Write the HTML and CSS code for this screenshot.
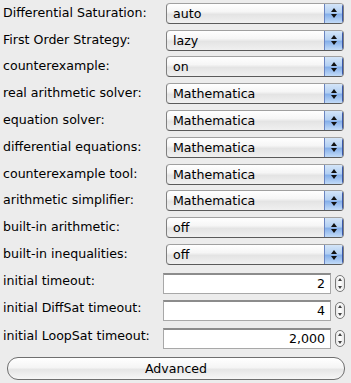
FILE: index.html
```html
<!DOCTYPE html>
<html>
<head>
<meta charset="utf-8">
<link rel="stylesheet" href="styles.css">
</head>
<body>
<div class="panel">
  <div class="row"><span class="label">Differential Saturation:</span><div class="select"><span class="val">auto</span><span class="arrows"><i class="up"></i><i class="dn"></i></span></div></div>
  <div class="row"><span class="label">First Order Strategy:</span><div class="select"><span class="val">lazy</span><span class="arrows"><i class="up"></i><i class="dn"></i></span></div></div>
  <div class="row"><span class="label">counterexample:</span><div class="select"><span class="val">on</span><span class="arrows"><i class="up"></i><i class="dn"></i></span></div></div>
  <div class="row"><span class="label">real arithmetic solver:</span><div class="select"><span class="val">Mathematica</span><span class="arrows"><i class="up"></i><i class="dn"></i></span></div></div>
  <div class="row"><span class="label">equation solver:</span><div class="select"><span class="val">Mathematica</span><span class="arrows"><i class="up"></i><i class="dn"></i></span></div></div>
  <div class="row"><span class="label">differential equations:</span><div class="select"><span class="val">Mathematica</span><span class="arrows"><i class="up"></i><i class="dn"></i></span></div></div>
  <div class="row"><span class="label">counterexample tool:</span><div class="select"><span class="val">Mathematica</span><span class="arrows"><i class="up"></i><i class="dn"></i></span></div></div>
  <div class="row"><span class="label">arithmetic simplifier:</span><div class="select"><span class="val">Mathematica</span><span class="arrows"><i class="up"></i><i class="dn"></i></span></div></div>
  <div class="row"><span class="label">built-in arithmetic:</span><div class="select"><span class="val">off</span><span class="arrows"><i class="up"></i><i class="dn"></i></span></div></div>
  <div class="row"><span class="label">built-in inequalities:</span><div class="select"><span class="val">off</span><span class="arrows"><i class="up"></i><i class="dn"></i></span></div></div>
  <div class="row tall"><span class="label">initial timeout:</span><div class="field">2</div><div class="stepper"><i class="up"></i><i class="dn"></i></div></div>
  <div class="row tall"><span class="label">initial DiffSat timeout:</span><div class="field">4</div><div class="stepper"><i class="up"></i><i class="dn"></i></div></div>
  <div class="row tall"><span class="label">initial LoopSat timeout:</span><div class="field">2,000</div><div class="stepper"><i class="up"></i><i class="dn"></i></div></div>
  <div class="btnrow"><div class="button">Advanced</div></div>
</div>
</body>
</html>
```
FILE: styles.css
```css
html, body {
  margin: 0;
  padding: 0;
  background: #ececec;
}
.panel {
  width: 351px;
  height: 383px;
  font-family: "DejaVu Sans", "Liberation Sans", sans-serif;
  font-size: 12.6px;
  color: #000;
  padding: 0 0 0 3px;
  box-sizing: border-box;
}
.row {
  display: flex;
  align-items: center;
  height: 26.8px;
}
.row.tall {
  height: 27.6px;
  padding-top: 3px;
  box-sizing: border-box;
}
.label {
  width: 163px;
  flex: none;
  position: relative;
  top: -1px;
}
.tall .label { top: -3px; }
.select {
  width: 178px;
  height: 21px;
  box-sizing: border-box;
  border: 1px solid #7f7f7f;
  border-top-color: #a0a0a0;
  border-bottom-color: #5a5a5a;
  border-radius: 4px;
  display: flex;
  align-items: stretch;
  background: linear-gradient(#ffffff 0%, #f6f6f6 40%, #e4e4e4 55%, #f0f0f0 100%);
  overflow: hidden;
}
.val {
  flex: 1;
  padding-left: 6px;
  line-height: 19px;
}
.arrows {
  width: 18px;
  flex: none;
  border-left: 1px solid #6a84c0;
  background: linear-gradient(#d4e5f8 0%, #b3d0f3 45%, #86b0ea 55%, #c2dbf8 100%);
  display: flex;
  flex-direction: column;
  align-items: center;
  justify-content: center;
  gap: 2px;
  box-shadow: inset -1px 0 0 #3a57a8;
}
.arrows .up, .stepper .up {
  width: 0; height: 0;
  border-left: 3px solid transparent;
  border-right: 3px solid transparent;
  border-bottom: 4px solid #111;
}
.arrows .dn, .stepper .dn {
  width: 0; height: 0;
  border-left: 3px solid transparent;
  border-right: 3px solid transparent;
  border-top: 4px solid #111;
}
.field {
  margin-left: -3px;
  width: 168px;
  height: 21px;
  box-sizing: border-box;
  background: #fff;
  border: 1px solid #a8a8a8;
  border-top: 2px solid #8c8c8c;
  text-align: right;
  padding-right: 5px;
  line-height: 18px;
}
.stepper {
  margin-left: 4px;
  width: 10px;
  height: 17px;
  box-sizing: border-box;
  border: 1px solid #7a7a7a;
  border-radius: 5px;
  background: linear-gradient(90deg, #e6e6e6, #ffffff 50%, #e6e6e6);
  display: flex;
  flex-direction: column;
  align-items: center;
  justify-content: space-between;
  padding: 2px 0;
}
.stepper .up { border-left-width: 2px; border-right-width: 2px; border-bottom: 3px solid #444; }
.stepper .dn { border-left-width: 2px; border-right-width: 2px; border-top: 3px solid #444; }
.btnrow {
  padding-top: 6px;
  padding-left: 4px;
}
.button {
  width: 338px;
  height: 23px;
  box-sizing: border-box;
  border: 1px solid #6f6f6f;
  border-radius: 11px;
  background: linear-gradient(#ffffff 0%, #f5f5f5 45%, #e6e6e6 55%, #f6f6f6 100%);
  text-align: center;
  line-height: 21px;
}
```
